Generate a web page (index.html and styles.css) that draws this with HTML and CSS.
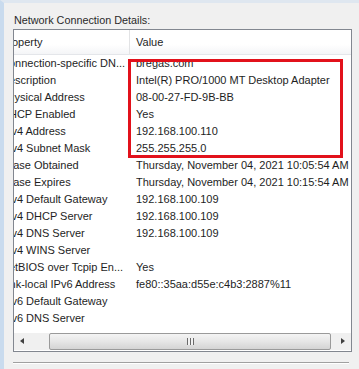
FILE: index.html
```html
<!DOCTYPE html>
<html lang="en">
<head>
    <meta charset="UTF-8">
    <title>Network Connection Details</title>
    <link rel="stylesheet" href="styles.css">
</head>
<body>
    <div class="window">
        <div class="caption">Network Connection Details:</div>

        <div class="listbox">
            <div class="list-header">
                <div class="col-prop"><span>Property</span></div>
                <div class="col-value">Value</div>
            </div>

            <div class="list-rows">
                <div class="row"><div class="col-prop"><span>Connection-specific DN...</span></div><div class="col-value">bregas.com</div></div>
                <div class="row"><div class="col-prop"><span>Description</span></div><div class="col-value">Intel(R) PRO/1000 MT Desktop Adapter</div></div>
                <div class="row"><div class="col-prop"><span>Physical Address</span></div><div class="col-value">08-00-27-FD-9B-BB</div></div>
                <div class="row"><div class="col-prop"><span>DHCP Enabled</span></div><div class="col-value">Yes</div></div>
                <div class="row"><div class="col-prop"><span>IPv4 Address</span></div><div class="col-value">192.168.100.110</div></div>
                <div class="row"><div class="col-prop"><span>IPv4 Subnet Mask</span></div><div class="col-value">255.255.255.0</div></div>
                <div class="row"><div class="col-prop"><span>Lease Obtained</span></div><div class="col-value">Thursday, November 04, 2021 10:05:54 AM</div></div>
                <div class="row"><div class="col-prop"><span>Lease Expires</span></div><div class="col-value">Thursday, November 04, 2021 10:15:54 AM</div></div>
                <div class="row"><div class="col-prop"><span>IPv4 Default Gateway</span></div><div class="col-value">192.168.100.109</div></div>
                <div class="row"><div class="col-prop"><span>IPv4 DHCP Server</span></div><div class="col-value">192.168.100.109</div></div>
                <div class="row"><div class="col-prop"><span>IPv4 DNS Server</span></div><div class="col-value">192.168.100.109</div></div>
                <div class="row"><div class="col-prop"><span>IPv4 WINS Server</span></div><div class="col-value"></div></div>
                <div class="row"><div class="col-prop"><span>NetBIOS over Tcpip En...</span></div><div class="col-value">Yes</div></div>
                <div class="row"><div class="col-prop"><span>Link-local IPv6 Address</span></div><div class="col-value">fe80::35aa:d55e:c4b3:2887%11</div></div>
                <div class="row"><div class="col-prop"><span>IPv6 Default Gateway</span></div><div class="col-value"></div></div>
                <div class="row"><div class="col-prop"><span>IPv6 DNS Server</span></div><div class="col-value"></div></div>
            </div>

            <div class="hscroll">
                <div class="arrow arrow-left"></div>
                <div class="track">
                    <div class="thumb"><span class="grip"></span></div>
                </div>
                <div class="arrow arrow-right"></div>
            </div>
        </div>

        <div class="separator"></div>
    </div>

    <!-- red annotation box drawn over the list -->
    <div class="highlight-box"></div>
</body>
</html>
```

FILE: styles.css
```css
body {
    margin: 0;
    width: 359px;
    height: 369px;
    overflow: hidden;
    background: #f0f0f0;
    font-family: "Liberation Sans", Arial, sans-serif;
    font-size: 11px;
    color: #1e1e1e;
    position: relative;
}

.window {
    height: 366px;
    border-top: 3px solid #dfe7f0;
    border-left: 4px solid #c9dbee;
    display: flex;
    flex-direction: column;
}

.caption {
    padding: 10px 0 0 10px;
    height: 16px;
    line-height: 14px;
    font-size: 10.8px;
    color: #2a2a2a;
}

.listbox {
    margin-left: 9px;
    width: 337px;
    height: 321px;
    border: 1px solid #828790;
    background: white;
    display: flex;
    flex-direction: column;
}

.list-header {
    display: grid;
    grid-template-columns: 116px 1fr;
    height: 24px;
    line-height: 25px;
    background: linear-gradient(#ffffff 60%, #f4f5f7);
    border-bottom: 1px solid #e4e6ea;
}

.list-header .col-prop {
    border-right: 1px solid #e2e3e5;
}

.list-rows {
    flex: 1;
}

.row {
    display: grid;
    grid-template-columns: 116px 1fr;
    height: 17px;
    line-height: 17px;
}

.col-prop {
    overflow: hidden;
    white-space: nowrap;
}

.col-prop span {
    display: inline-block;
    margin-left: -13px;
}

.col-value {
    padding-left: 6px;
    white-space: nowrap;
    overflow: hidden;
}

.hscroll {
    height: 17px;
    display: flex;
    background: #f0f0f0;
    margin-bottom: 1px;
}

.arrow {
    width: 17px;
    position: relative;
}

.arrow::after {
    content: "";
    position: absolute;
    top: 5px;
    border-top: 3.5px solid transparent;
    border-bottom: 3.5px solid transparent;
}

.arrow-left::after {
    left: 6px;
    border-right: 4px solid #404040;
}

.arrow-right::after {
    left: 7px;
    border-left: 4px solid #404040;
}

.track {
    flex: 1;
    padding: 0 3px 0 18px;
    display: flex;
}

.thumb {
    flex: 1;
    border: 1px solid #9a9a9a;
    border-radius: 2px;
    background: linear-gradient(#f4f4f4, #e6e6e6 50%, #d4d4d4);
    display: flex;
    justify-content: center;
    align-items: center;
}

.grip {
    width: 7px;
    height: 7px;
    background: repeating-linear-gradient(90deg, #6a6a6a 0 1px, #f2f2f2 1px 3px);
}

.separator {
    margin: 10px 0 0 9px;
    width: 336px;
    border-top: 1px solid #a0a0a0;
    border-bottom: 1px solid #ffffff;
}

.highlight-box {
    position: absolute;
    left: 128px;
    top: 59px;
    width: 209px;
    height: 93px;
    border: 3px solid #e2111b;
}
```
